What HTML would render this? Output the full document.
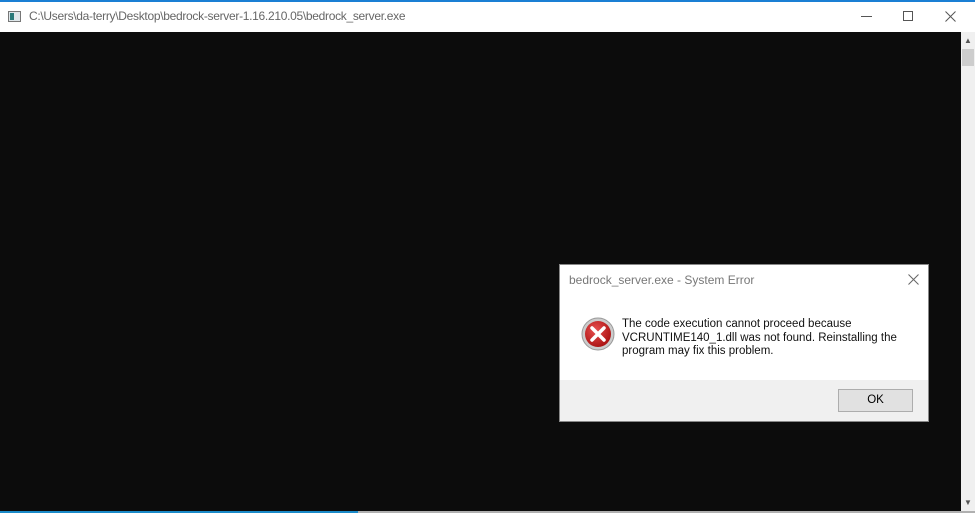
<!DOCTYPE html>
<html><head><style>
*{margin:0;padding:0;box-sizing:border-box}
body{width:975px;height:513px;overflow:hidden;background:#0c0c0c;position:relative;font-family:"Liberation Sans",sans-serif}
.topblue{position:absolute;left:0;top:0;width:975px;height:2px;background:#1a7fd4}
.title{position:absolute;left:0;top:2px;width:975px;height:30px;background:#fff}
.title .t{position:absolute;left:29px;top:7px;font-size:12px;color:#666;letter-spacing:-0.3px}
.ico{position:absolute;left:8px;top:9px;width:13px;height:11px;border:1px solid #777;background:#dfe7ea}
.ico:after{content:"";position:absolute;left:1px;top:1px;width:4px;height:7px;background:#2a7a7a}
.sb{position:absolute;left:961px;top:32px;width:14px;height:479px;background:#f0f0f0}
.thumb{position:absolute;left:962px;top:49px;width:12px;height:17px;background:#cdcdcd}
.bot{position:absolute;left:0;top:511px;width:975px;height:2px;background:#b0b0b0}
.bot i{position:absolute;left:0;top:0;width:358px;height:2px;background:#1a8ac8}
.dlg{position:absolute;left:559px;top:264px;width:370px;height:158px;background:#fff;border:1px solid #888}
.dlg .dt{position:absolute;left:9px;top:8px;font-size:12px;color:#777}
.msg{position:absolute;left:62px;top:53px;font-size:11.5px;color:#111;line-height:13.5px;width:300px}
.foot{position:absolute;left:0;top:115px;width:368px;height:41px;background:#f0f0f0}
.ok{position:absolute;left:278px;top:9px;width:75px;height:23px;border:1px solid #adadad;background:#e1e1e1;font-size:11.5px;text-align:center;line-height:21px}
</style></head><body>
<div class="topblue"></div>
<div class="title"><div class="ico"></div><div class="t">C:\Users\da-terry\Desktop\bedrock-server-1.16.210.05\bedrock_server.exe</div>
<div style="position:absolute;left:861px;top:14px;width:11px;height:1px;background:#555"></div>
<div style="position:absolute;left:903px;top:9px;width:10px;height:10px;border:1px solid #555"></div>
<svg style="position:absolute;left:945px;top:9px" width="11" height="11"><path d="M0.5 0.5L10.5 10.5M10.5 0.5L0.5 10.5" stroke="#555" stroke-width="1"/></svg></div>
<div class="sb"><div style="position:absolute;left:3px;top:4px;font-size:8px;color:#555">&#9650;</div><div style="position:absolute;left:3px;top:466px;font-size:8px;color:#555">&#9660;</div></div>
<div class="thumb"></div>
<div class="bot"><i></i></div>
<div class="dlg">
<div class="dt">bedrock_server.exe - System Error</div>
<svg style="position:absolute;left:348px;top:9px" width="11" height="11"><path d="M0.5 0.5L10.5 10.5M10.5 0.5L0.5 10.5" stroke="#666" stroke-width="1"/></svg>
<svg style="position:absolute;left:21px;top:52px" width="34" height="34" viewBox="0 0 34 34">
<defs><radialGradient id="g" cx="0.4" cy="0.35" r="0.7"><stop offset="0" stop-color="#e85050"/><stop offset="1" stop-color="#a80f0f"/></radialGradient></defs>
<circle cx="17" cy="17" r="16" fill="#ccc" stroke="#999"/>
<circle cx="17" cy="17" r="13" fill="url(#g)"/>
<path d="M11 11L23 23M23 11L11 23" stroke="#fff" stroke-width="3.5" stroke-linecap="round"/>
</svg>
<div class="msg">The code execution cannot proceed because VCRUNTIME140_1.dll was not found. Reinstalling the program may fix this problem.</div>
<div class="foot"><div class="ok">OK</div></div>
</div>
</body></html>
